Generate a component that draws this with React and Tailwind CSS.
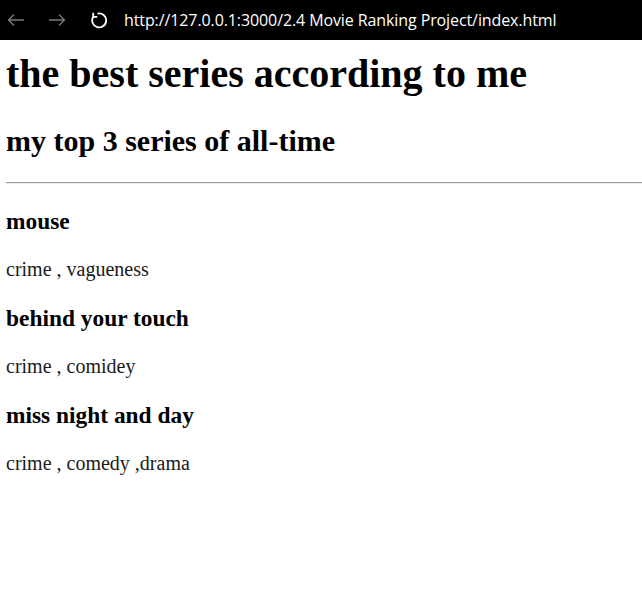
import React from 'react';

const series = [
    { title: 'mouse', genres: 'crime , vagueness' },
    { title: 'behind your touch', genres: 'crime , comidey' },
    { title: 'miss night and day', genres: 'crime , comedy ,drama' },
];

const BackIcon = ({ className }) => (
    <svg width="18" height="14" viewBox="0 0 18 14" fill="none" stroke="currentColor" strokeWidth="1.3" className={className}>
        <path d="M17 7H1.5M7 1.5L1.5 7L7 12.5" />
    </svg>
);

const ForwardIcon = ({ className }) => (
    <svg width="18" height="14" viewBox="0 0 18 14" fill="none" stroke="currentColor" strokeWidth="1.3" className={className}>
        <path d="M1 7H16.5M11 1.5L16.5 7L11 12.5" />
    </svg>
);

const RefreshIcon = ({ className }) => (
    <svg width="18" height="18" viewBox="0 0 18 18" fill="none" stroke="currentColor" strokeWidth="1.8" className={className}>
        <path d="M7.6 2.6A7 7 0 1 1 3.2 5.8" />
        <path d="M3.2 1.8V5.8H7.2" />
    </svg>
);

const BrowserBar = () => (
    <div className="h-10 bg-black flex items-center">
        <BackIcon className="ml-[7px] text-[#7c7c7c]" />
        <ForwardIcon className="ml-[23px] text-[#7c7c7c]" />
        <RefreshIcon className="ml-[24px] text-white" />
        <span className="ml-[16px] text-white text-[16px] leading-none font-['Open_Sans',sans-serif] tracking-[-0.1px]">
            http://127.0.0.1:3000/2.4 Movie Ranking Project/index.html
        </span>
    </div>
);

export default function App() {
    return (
        <div className="w-[642px] h-[593px] bg-white overflow-hidden">
            <BrowserBar />

            {/* Page */}
            <div className="pl-[6px] text-black font-['Liberation_Serif','Times_New_Roman',serif]">
                <h1 className="text-[40px] font-bold leading-[normal] mt-[10px] mb-[27px]">the best series according to me</h1>
                <h2 className="text-[30px] font-bold leading-[normal] mb-[24px]">my top 3 series of all-time</h2>
                <div className="border-t border-[#9a9a9a] border-b border-b-[#eeeeee]" />

                <div className="mt-[24px]">
                    {series.map((s) => (
                        <div key={s.title}>
                            <h3 className="text-[23.4px] font-bold leading-[normal] mb-[23.4px]">{s.title}</h3>
                            <p className="text-[20px] text-[#1a1a1a] leading-[normal] mb-[23.4px]">{s.genres}</p>
                        </div>
                    ))}
                </div>
            </div>
        </div>
    );
}
